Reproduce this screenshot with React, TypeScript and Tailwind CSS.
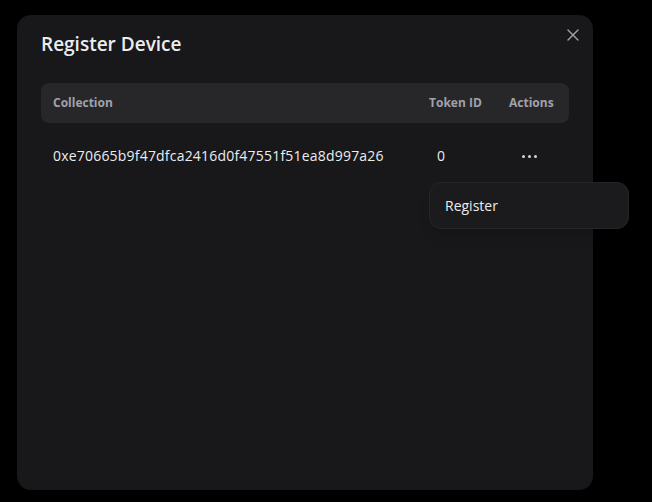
import { X } from "lucide-react";

const rows = [
  { collection: "0xe70665b9f47dfca2416d0f47551f51ea8d997a26", tokenId: "0" },
];

export default function App() {
  return (
    <div
      className="min-h-screen bg-black pl-[17px] pt-[15px]"
      style={{ fontFamily: '"Open Sans", "Noto Sans", sans-serif' }}
    >
      <div className="relative h-[475px] w-[576px] rounded-[14px] bg-[#18181b] px-6 pt-[15px]">
        <button
          type="button"
          className="absolute left-[546px] top-[10px] flex h-5 w-5 items-center justify-center text-[#a1a1aa]"
        >
          <X size={20} strokeWidth={1.6} />
        </button>

        <h2 className="h-7 text-[19px] font-semibold leading-7 text-[#ececee]">Register Device</h2>

        {/* Tabela */}
        <div className="mt-[25px]">
          <div className="grid h-10 grid-cols-[1fr_80px_72px] items-center rounded-lg bg-[#27272a] text-xs font-bold text-[#a1a1aa]">
            <div className="px-3">Collection</div>
            <div className="px-3">Token ID</div>
            <div className="px-3">Actions</div>
          </div>

          {rows.map((row) => (
            <div
              key={row.collection}
              className="mt-[23px] grid grid-cols-[1fr_80px_72px] items-center text-sm leading-5 text-[#ececee]"
            >
              <div className="px-3 tracking-[0.2px]">{row.collection}</div>
              <div className="pl-5">{row.tokenId}</div>
              <div className="flex pl-[25px]">
                <span className="flex items-center gap-[3px] text-[#d4d4d8]">
                  <span className="h-[3px] w-[3px] rounded-full bg-current" />
                  <span className="h-[3px] w-[3px] rounded-full bg-current" />
                  <span className="h-[3px] w-[3px] rounded-full bg-current" />
                </span>
              </div>
            </div>
          ))}
        </div>

        {/* Menu de ações */}
        <div className="absolute left-[412px] top-[167px] flex h-[47px] w-[200px] items-center rounded-xl border border-[#26262a] bg-[#1b1b1e] pl-[15px] shadow-lg">
          <span className="text-sm text-[#ececee]">Register</span>
        </div>
      </div>
    </div>
  );
}
